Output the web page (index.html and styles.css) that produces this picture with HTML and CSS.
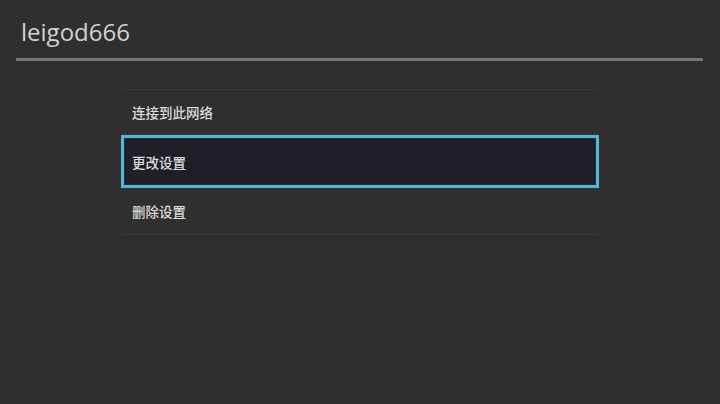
FILE: index.html
```html
<!DOCTYPE html>
<html lang="zh">
<head>
<meta charset="utf-8">
<link rel="stylesheet" href="styles.css">
</head>
<body>
<div class="screen">
  <header class="header">
    <h1 class="title">leigod666</h1>
  </header>
  <ul class="menu">
    <li class="item">连接到此网络</li>
    <li class="item focused">更改设置</li>
    <li class="item">删除设置</li>
  </ul>
</div>
</body>
</html>
```
FILE: styles.css
```css
html, body {
  margin: 0;
  padding: 0;
  background: #2f2f2f;
}
.screen {
  width: 720px;
  height: 404px;
  background: #2f2f2f;
  font-family: "Noto Sans", "Noto Sans CJK SC", sans-serif;
  overflow: hidden;
}
.header {
  margin: 0 17px 0 16px;
  padding: 16px 0 0 5px;
  height: 42px;
  border-bottom: 3px solid #747474;
  box-sizing: content-box;
}
.title {
  margin: 0;
  font-family: "Open Sans", "Noto Sans", sans-serif;
  font-weight: 400;
  font-size: 24px;
  line-height: 32px;
  color: #d2d2d2;
}
.menu {
  list-style: none;
  margin: 28px 0 0 121px;
  padding: 0;
  width: 478px;
  border-top: 1px solid #3a3a3a;
}
.item {
  height: 46px;
  display: flex;
  align-items: center;
  padding-left: 11px;
  font-family: "Noto Sans CJK SC", sans-serif;
  font-size: 13.5px;
  font-weight: 500;
  color: #dcdcdc;
  border-bottom: 1px solid #3a3a3a;
  box-sizing: content-box;
}
.item:first-child {
  height: 44px;
}
.item.focused {
  height: 47px;
  border: 3px solid #56b6d2;
  padding-left: 8px;
  background: #1f2027;
  box-shadow: inset 0 0 0 1px #14343f;
}
```
